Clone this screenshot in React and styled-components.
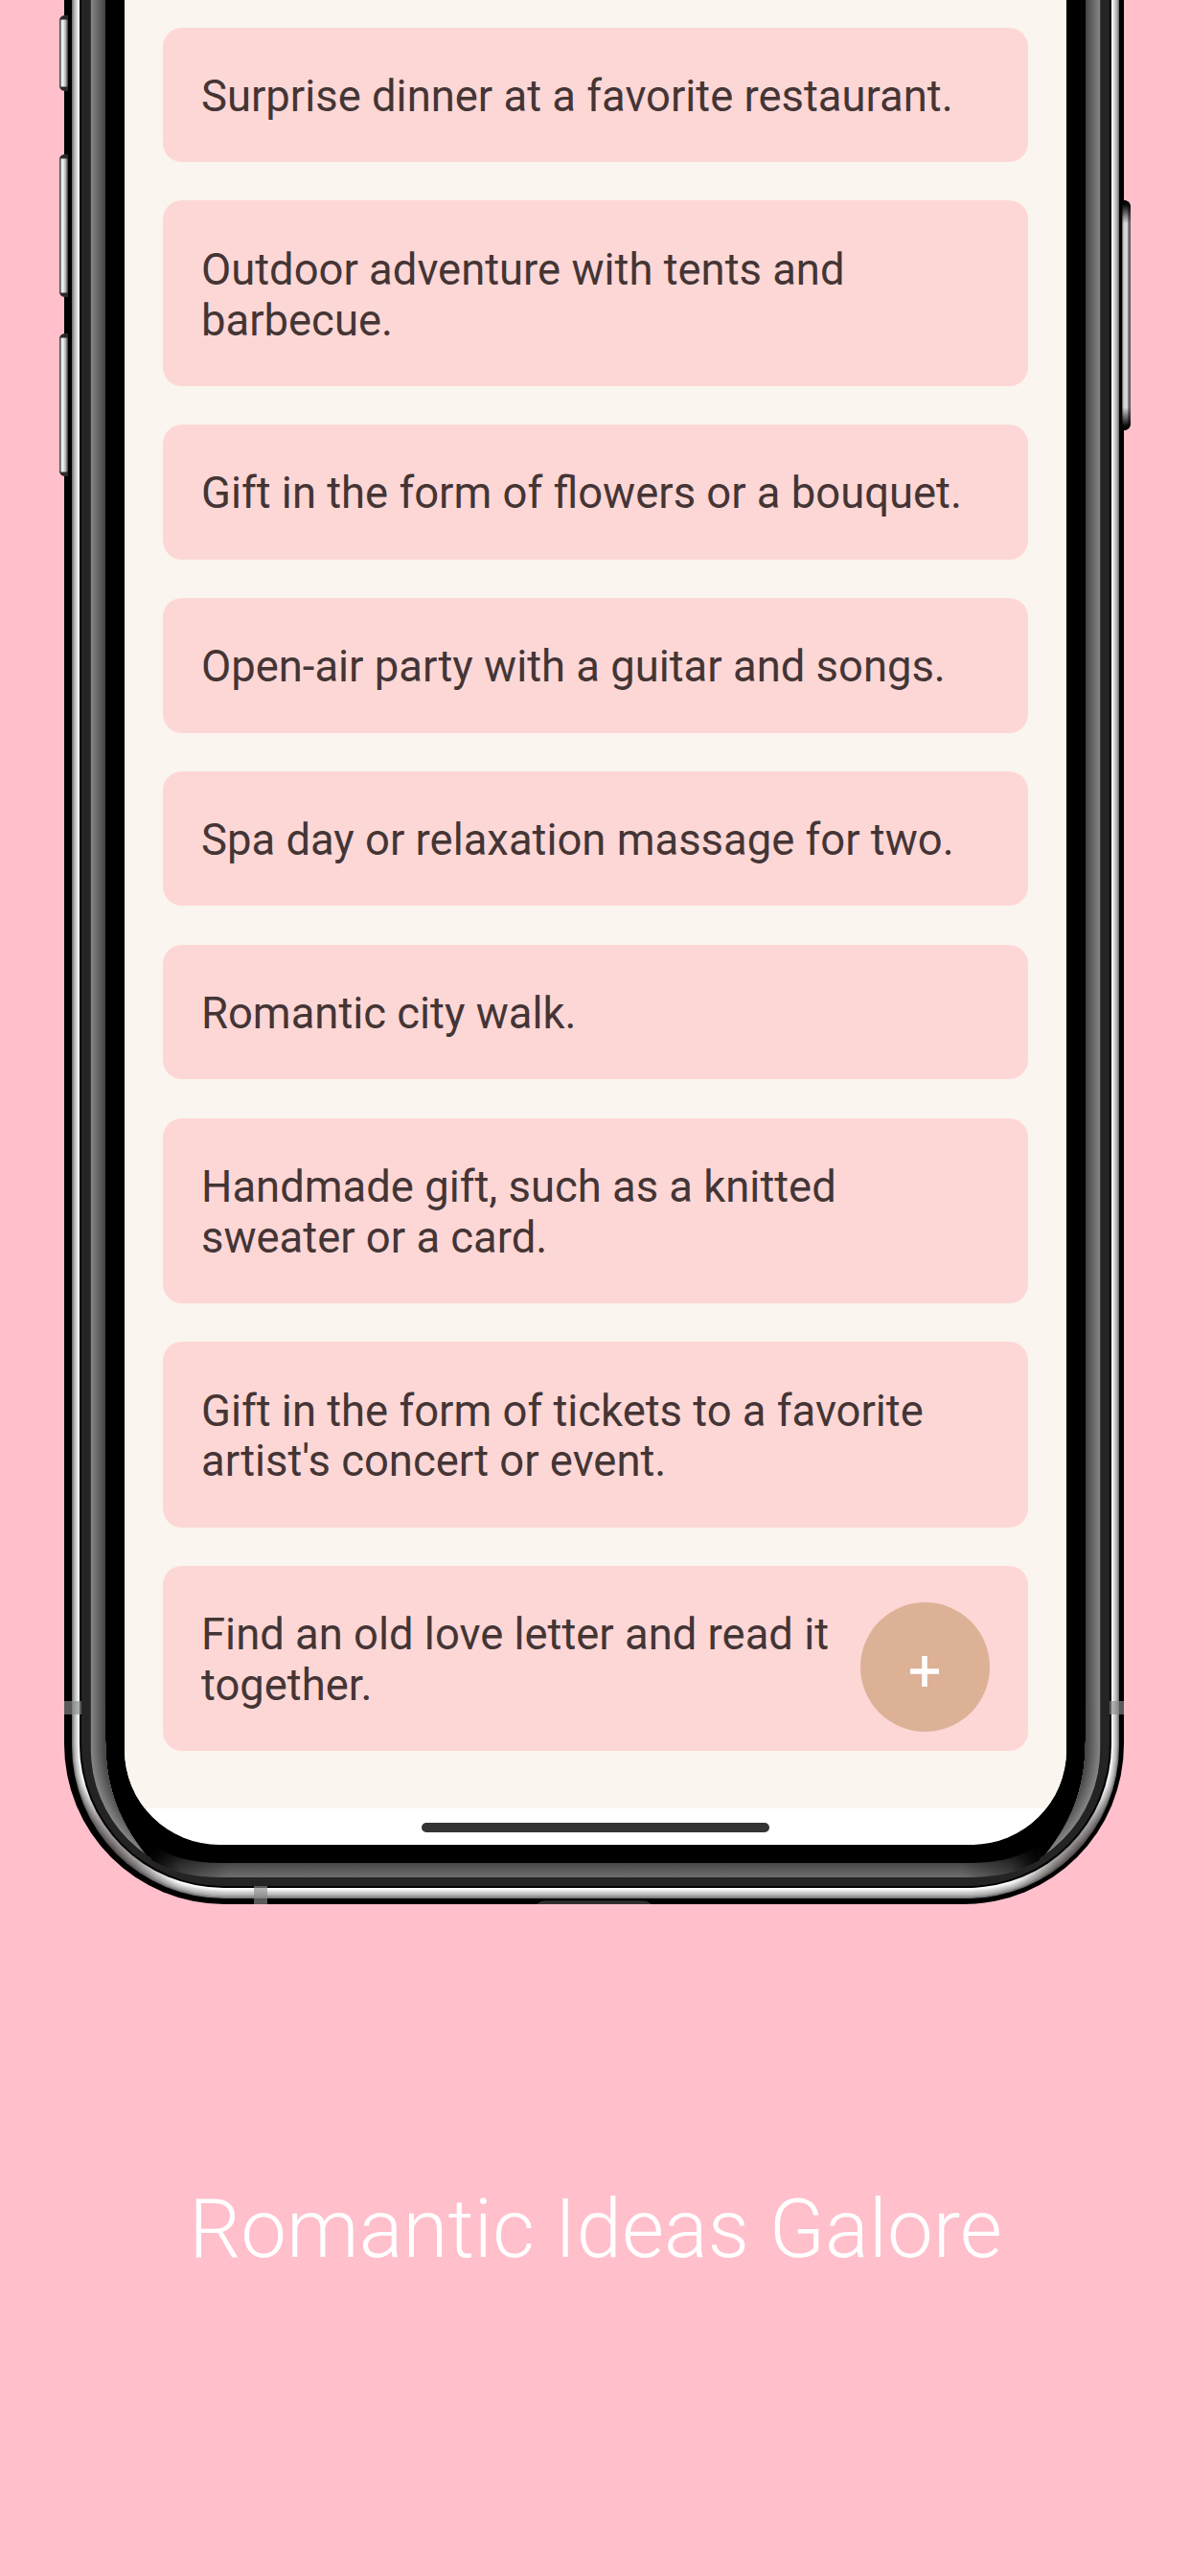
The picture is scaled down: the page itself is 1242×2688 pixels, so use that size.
import React from "react";
import styled, { createGlobalStyle } from "styled-components";

const GlobalStyle = createGlobalStyle`
  body { margin: 0; background: #ffbfcb; }
  *, *::before, *::after { box-sizing: border-box; }
`;

const Page = styled.main`
  width: 1242px;
  height: 2688px;
  overflow: hidden;
  display: flex;
  flex-direction: column;
  background: #ffbfcb;
  font-family: Roboto, "Liberation Sans", sans-serif;
`;

const Phone = styled.section`
  position: relative;
  height: 1987px;
  flex: none;
  padding: 0 129px 62px 130px;
`;

const Frame = styled.svg`
  position: absolute;
  left: 0;
  top: 0;
  display: block;
`;

const Screen = styled.div`
  position: relative;
  height: 1925px;
  overflow: hidden;
  display: flex;
  flex-direction: column;
  background: #fff;
  border-radius: 0 0 99px 99px;
`;

const List = styled.ul`
  margin: 0;
  height: 1887px;
  flex: none;
  padding: 28.5px 40.5px 0 40px;
  display: flex;
  flex-direction: column;
  gap: 40.2px;
  list-style: none;
  background: #faf5ee;
`;

const Card = styled.li`
  padding: 46.5px 36px 41.5px 40px;
  border-radius: 20px;
  background: #fdd7d6;
  color: #443535;
  font-size: 45.4px;
  line-height: 52.7px;
  white-space: pre;
`;

const HomeArea = styled.div`
  flex: 1;
  display: flex;
  justify-content: center;
  padding: 14.5px 1px 0 0;
`;

const HomeBar = styled.div`
  width: 363px;
  height: 10.5px;
  border-radius: 6px;
  background: #333;
`;

const AddButton = styled.button`
  position: absolute;
  right: 80.5px;
  bottom: 118px;
  width: 135px;
  height: 135px;
  padding: 8px 0 0;
  border: 0;
  border-radius: 50%;
  background: #ddb196;
  display: flex;
  align-items: center;
  justify-content: center;
`;

const Caption = styled.footer`
  flex: 1;
  display: flex;
  justify-content: center;
  padding: 289px 0 0 1px;
`;

const Title = styled.h1`
  margin: 0;
  font-size: 85.3px;
  line-height: 100px;
  font-weight: 300;
  color: #fff;
  white-space: nowrap;
`;

const ideas = [
  "Surprise dinner at a favorite restaurant.",
  "Outdoor adventure with tents and\nbarbecue.",
  "Gift in the form of flowers or a bouquet.",
  "Open-air party with a guitar and songs.",
  "Spa day or relaxation massage for two.",
  "Romantic city walk.",
  "Handmade gift, such as a knitted\nsweater or a card.",
  "Gift in the form of tickets to a favorite\nartist's concert or event.",
  "Find an old love letter and read it\ntogether.",
];

// U-shaped outline of the phone body, open at the top edge of the page.
const shell = (l, r, b, rad) =>
  `M${l} -5V${b - rad}A${rad} ${rad} 0 0 0 ${l + rad} ${b}H${r - rad}A${rad} ${rad} 0 0 0 ${r} ${b - rad}V-5Z`;

const mix = (a, b, t) => a + (b - a) * t;

// Steel rim, outermost layer first.
const rimTones = [118, 150, 172, 190, 205, 222, 240, 252];
const rim = rimTones.map((tone, i) => {
  const t = i / rimTones.length;
  return {
    d: shell(mix(75, 83, t), mix(1168, 1160, t), mix(1981, 1970, t), mix(159, 150, t)),
    fill: `rgb(${tone},${tone},${tone})`,
  };
});

// Inner side wall, brightest near the frame.
const wall = Array.from({ length: 16 }, (_, i) => {
  const t = i / 15;
  const tone = Math.round(mix(133, 66, t));
  return {
    d: shell(mix(94.7, 110, t), mix(1148.3, 1133, t), mix(1959, 1949, t), mix(134, 128, t)),
    fill: `rgb(${tone},${tone},${tone})`,
  };
});

const sideButtons = [
  { y: 16, h: 79 },
  { y: 161, h: 149 },
  { y: 348, h: 149 },
];

const crescent =
  "M94 -5V1825C95 1885 118 1925 158 1942C126 1906 110 1868 110 1815V-5Z";

const floorPath =
  "M158 1941Q188 1959 230 1959H1013Q1055 1959 1085 1941L1084 1925Q1058 1944 1013 1944H230Q185 1944 158 1925Z";

function PhoneFrame() {
  return (
    <Frame width="1242" height="1987" viewBox="0 0 1242 1987" aria-hidden="true">
      <defs>
        <linearGradient id="keyLeft" x1="0" x2="1" y1="0" y2="0">
          <stop offset="0" stopColor="#444" />
          <stop offset="0.12" stopColor="#666" />
          <stop offset="0.28" stopColor="#eee" />
          <stop offset="0.48" stopColor="#e8e8e8" />
          <stop offset="0.75" stopColor="#a8a8a8" />
          <stop offset="1" stopColor="#333" />
        </linearGradient>
        <linearGradient id="keyRight" x1="0" x2="1" y1="0" y2="0">
          <stop offset="0" stopColor="#444" />
          <stop offset="0.2" stopColor="#d4d4d4" />
          <stop offset="0.6" stopColor="#d8d8d8" />
          <stop offset="0.75" stopColor="#777" />
          <stop offset="1" stopColor="#555" />
        </linearGradient>
        <linearGradient id="keyShade" x1="0" x2="0" y1="0" y2="1">
          <stop offset="0" stopColor="#000" />
          <stop offset="0.02" stopColor="#000" stopOpacity="0.95" />
          <stop offset="0.1" stopColor="#000" stopOpacity="0" />
          <stop offset="0.9" stopColor="#000" stopOpacity="0" />
          <stop offset="0.98" stopColor="#000" stopOpacity="0.95" />
          <stop offset="1" stopColor="#000" />
        </linearGradient>
        <linearGradient id="floor" gradientUnits="userSpaceOnUse" x1="0" x2="0" y1="1926" y2="1959">
          <stop offset="0" stopColor="#000" />
          <stop offset="0.55" stopColor="#484848" />
          <stop offset="1" stopColor="#6e6e6e" />
        </linearGradient>
        <linearGradient id="floorFade" gradientUnits="userSpaceOnUse" x1="156" x2="1087" y1="0" y2="0">
          <stop offset="0" stopColor="#000" />
          <stop offset="0.035" stopColor="#000" stopOpacity="0.4" />
          <stop offset="0.09" stopColor="#000" stopOpacity="0" />
          <stop offset="0.91" stopColor="#000" stopOpacity="0" />
          <stop offset="0.965" stopColor="#000" stopOpacity="0.4" />
          <stop offset="1" stopColor="#000" />
        </linearGradient>
        <radialGradient id="cornerShade">
          <stop offset="0" stopColor="#2a1c1c" stopOpacity="0.5" />
          <stop offset="0.4" stopColor="#2a1c1c" stopOpacity="0.4" />
          <stop offset="1" stopColor="#2a1c1c" stopOpacity="0" />
        </radialGradient>
        <clipPath id="rimClip">
          <path d={shell(75, 1168, 1981, 159)} />
        </clipPath>
        <clipPath id="wallClip">
          <path d={crescent} />
          <path d={crescent} transform="translate(1243 0) scale(-1 1)" />
        </clipPath>
      </defs>

      <path d={shell(67, 1173, 1987, 167)} fill="#000" />
      {sideButtons.map((b) => (
        <g key={b.y}>
          <path
            d={`M71 ${b.y}H67Q62 ${b.y + 1} 62 ${b.y + 6}V${b.y + b.h - 6}Q62 ${b.y + b.h - 1} 67 ${b.y + b.h}H71Z`}
            fill="#2a2a2a"
          />
          <rect x="62" y={b.y + 4.5} width="9" height={b.h - 9} rx="1.5" fill="url(#keyLeft)" />
        </g>
      ))}
      <path d="M1171 209H1175Q1180 211 1180 216V442Q1180 447 1175 449H1171Z" fill="url(#keyRight)" />
      <path d="M1171 209H1175Q1180 211 1180 216V442Q1180 447 1175 449H1171Z" fill="url(#keyShade)" />

      {rim.map((p) => (
        <path key={p.d} {...p} />
      ))}
      <g clipPath="url(#rimClip)">
        <circle cx="118" cy="1928" r="75" fill="url(#cornerShade)" />
        <circle cx="1124" cy="1928" r="75" fill="url(#cornerShade)" />
      </g>
      <path d={shell(83, 1160, 1970, 150)} fill="#000" />
      <path d={shell(85, 1158, 1968, 148)} fill="#242424" />
      <path d={shell(94.7, 1148.3, 1959, 134)} fill="#000" />
      <path d={floorPath} fill="url(#floor)" />
      <path d={floorPath} fill="url(#floorFade)" />
      <g clipPath="url(#wallClip)">
        {wall.map((p) => (
          <path key={p.d} {...p} />
        ))}
      </g>

      <g fill="#8a8a8a" fillOpacity="0.65">
        <rect x="67" y="1775" width="18" height="14" />
        <rect x="1158" y="1775" width="15" height="14" />
        <rect x="265" y="1968" width="14" height="19" />
      </g>
      <path d="M561 1987Q564 1984 569 1984H671Q676 1984 679 1987Z" fill="#2c2c2c" stroke="#444" strokeWidth="0.8" />
    </Frame>
  );
}

export default function App() {
  return (
    <Page>
      <GlobalStyle />
      <Phone>
        <PhoneFrame />
        <Screen>
          <List>
            {ideas.map((idea) => (
              <Card key={idea}>{idea}</Card>
            ))}
          </List>
          <HomeArea>
            <HomeBar />
          </HomeArea>
          <AddButton aria-label="Add idea">
            <svg width="32" height="32" viewBox="0 0 32 32">
              <path d="M16 0V32M1 16H31" stroke="#fff" strokeWidth="5.6" />
            </svg>
          </AddButton>
        </Screen>
      </Phone>
      <Caption>
        <Title>Romantic Ideas Galore</Title>
      </Caption>
    </Page>
  );
}
